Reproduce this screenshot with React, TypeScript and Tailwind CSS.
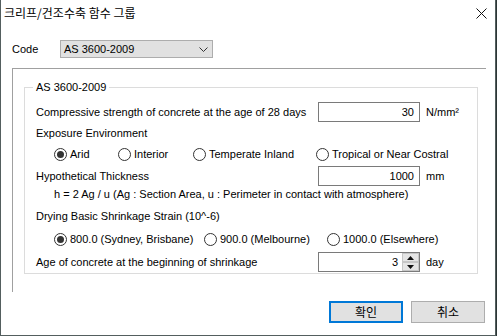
import React from 'react'

const Radio = ({ checked, label, className }: { checked?: boolean; label: string; className?: string }) => (
    <div className={`flex items-center h-4 ${className ?? ''}`}>
        <span className="w-[13px] h-[13px] rounded-full border border-[#333] bg-white flex items-center justify-center shrink-0">
            {checked && <span className="w-[7px] h-[7px] rounded-full bg-[#333]" />}
        </span>
        <span className="ml-[3px] whitespace-nowrap">{label}</span>
    </div>
)

const ValueBox = ({ value }: { value: string }) => (
    <div className="w-[102px] h-5 border border-[#7a7a7a] bg-white flex items-center justify-end pr-[5px]">{value}</div>
)

export default function App() {
    return (
        <div className="w-[497px] h-[336px] bg-[#2c3636] [font-family:'Liberation_Sans',Arial,sans-serif] text-[11px] text-black leading-4">
            <div className="w-[496px] h-[336px] bg-white border-l border-r border-b border-[#535e5e] flex flex-col">
                {/* title bar */}
                <div className="h-[30px] flex items-center justify-between pl-[3px] pr-[8px]">
                    <span className="[font-family:'Noto_Sans_CJK_KR',sans-serif] text-[12px] -mt-[4px]">크리프/건조수축 함수 그룹</span>
                    <svg width="11" height="11" viewBox="0 0 11 11" className="-mt-[4px]">
                        <path d="M0.5 0.5 L10.5 10.5 M10.5 0.5 L0.5 10.5" stroke="#111" strokeWidth="1" />
                    </svg>
                </div>

                {/* code */}
                <div className="mt-[10px] h-[18px] flex items-center pl-[11px]">
                    <span className="w-[48px]">Code</span>
                    <div className="w-[153px] h-[18px] bg-[#e1e1e1] border border-[#adadad] flex items-center justify-between pl-[3px] pr-[4px]">
                        <span>AS 3600-2009</span>
                        <svg width="9" height="5" viewBox="0 0 9 5">
                            <path d="M0.5 0.5 L4.5 4.5 L8.5 0.5" fill="none" stroke="#333" strokeWidth="1" />
                        </svg>
                    </div>
                </div>

                {/* outer panel */}
                <div className="mt-[10px] ml-[11px] w-[474px] h-[224px] border-t border-l border-[#a0a0a0]">
                    <fieldset className="mt-[10px] ml-[11px] w-[454px] h-[195px] border border-[#dcdcdc] pl-[8px] pr-2 pb-[9px]">
                        <legend className="px-[3px] leading-4">AS 3600-2009</legend>
                        <div className="pl-[3px] flex flex-col whitespace-nowrap">
                            <div className="mt-[7px] h-5 flex items-center">
                                <span className="w-[282px]">Compressive strength of concrete at the age of 28 days</span>
                                <ValueBox value="30" />
                                <span className="ml-[6px]">N/mm²</span>
                            </div>
                            <div className="mt-[3px] h-4">Exposure Environment</div>
                            <div className="mt-[5px] h-4 flex items-center pl-[18px]">
                                <Radio checked label="Arid" className="w-[64px]" />
                                <Radio label="Interior" className="w-[75px]" />
                                <Radio label="Temperate Inland" className="w-[123px]" />
                                <Radio label="Tropical or Near Costral" />
                            </div>
                            <div className="mt-[4px] h-5 flex items-center">
                                <span className="w-[282px]">Hypothetical Thickness</span>
                                <ValueBox value="1000" />
                                <span className="ml-[6px]">mm</span>
                            </div>
                            <div className="h-4 pl-[18px]">h = 2 Ag / u (Ag : Section Area, u : Perimeter in contact with atmosphere)</div>
                            <div className="mt-[6px] h-4">Drying Basic Shrinkage Strain (10^-6)</div>
                            <div className="mt-[7px] h-4 flex items-center pl-[18px]">
                                <Radio checked label="800.0 (Sydney, Brisbane)" className="w-[150px]" />
                                <Radio label="900.0 (Melbourne)" className="w-[123px]" />
                                <Radio label="1000.0 (Elsewhere)" />
                            </div>
                            <div className="mt-[5px] h-5 flex items-center">
                                <span className="w-[282px]">Age of concrete at the beginning of shrinkage</span>
                                <div className="w-[102px] h-5 border border-[#7a7a7a] bg-white flex">
                                    <div className="flex-1 flex items-center justify-end pr-[4px]">3</div>
                                    <div className="w-[17px] flex flex-col">
                                        <div className="h-[9px] bg-[#e5e5e5] border border-[#c6c6c6] flex items-center justify-center">
                                            <svg width="7" height="4" viewBox="0 0 7 4"><path d="M0 4 L3.5 0 L7 4 Z" fill="#111" /></svg>
                                        </div>
                                        <div className="h-[9px] bg-[#e5e5e5] border border-[#c6c6c6] flex items-center justify-center">
                                            <svg width="7" height="4" viewBox="0 0 7 4"><path d="M0 0 L3.5 4 L7 0 Z" fill="#111" /></svg>
                                        </div>
                                    </div>
                                </div>
                                <span className="ml-[6px]">day</span>
                            </div>
                        </div>
                    </fieldset>
                </div>

                {/* buttons */}
                <div className="mt-[9px] flex justify-end gap-2 pr-[10px] [font-family:'Noto_Sans_CJK_KR',sans-serif]">
                    <button className="w-[74px] h-[22px] bg-[#e1e1e1] border-2 border-[#0078d7] flex items-center justify-center text-[12px]">확인</button>
                    <button className="w-[74px] h-[22px] bg-[#e1e1e1] border border-[#adadad] flex items-center justify-center text-[12px]">취소</button>
                </div>
            </div>
        </div>
    )
}
